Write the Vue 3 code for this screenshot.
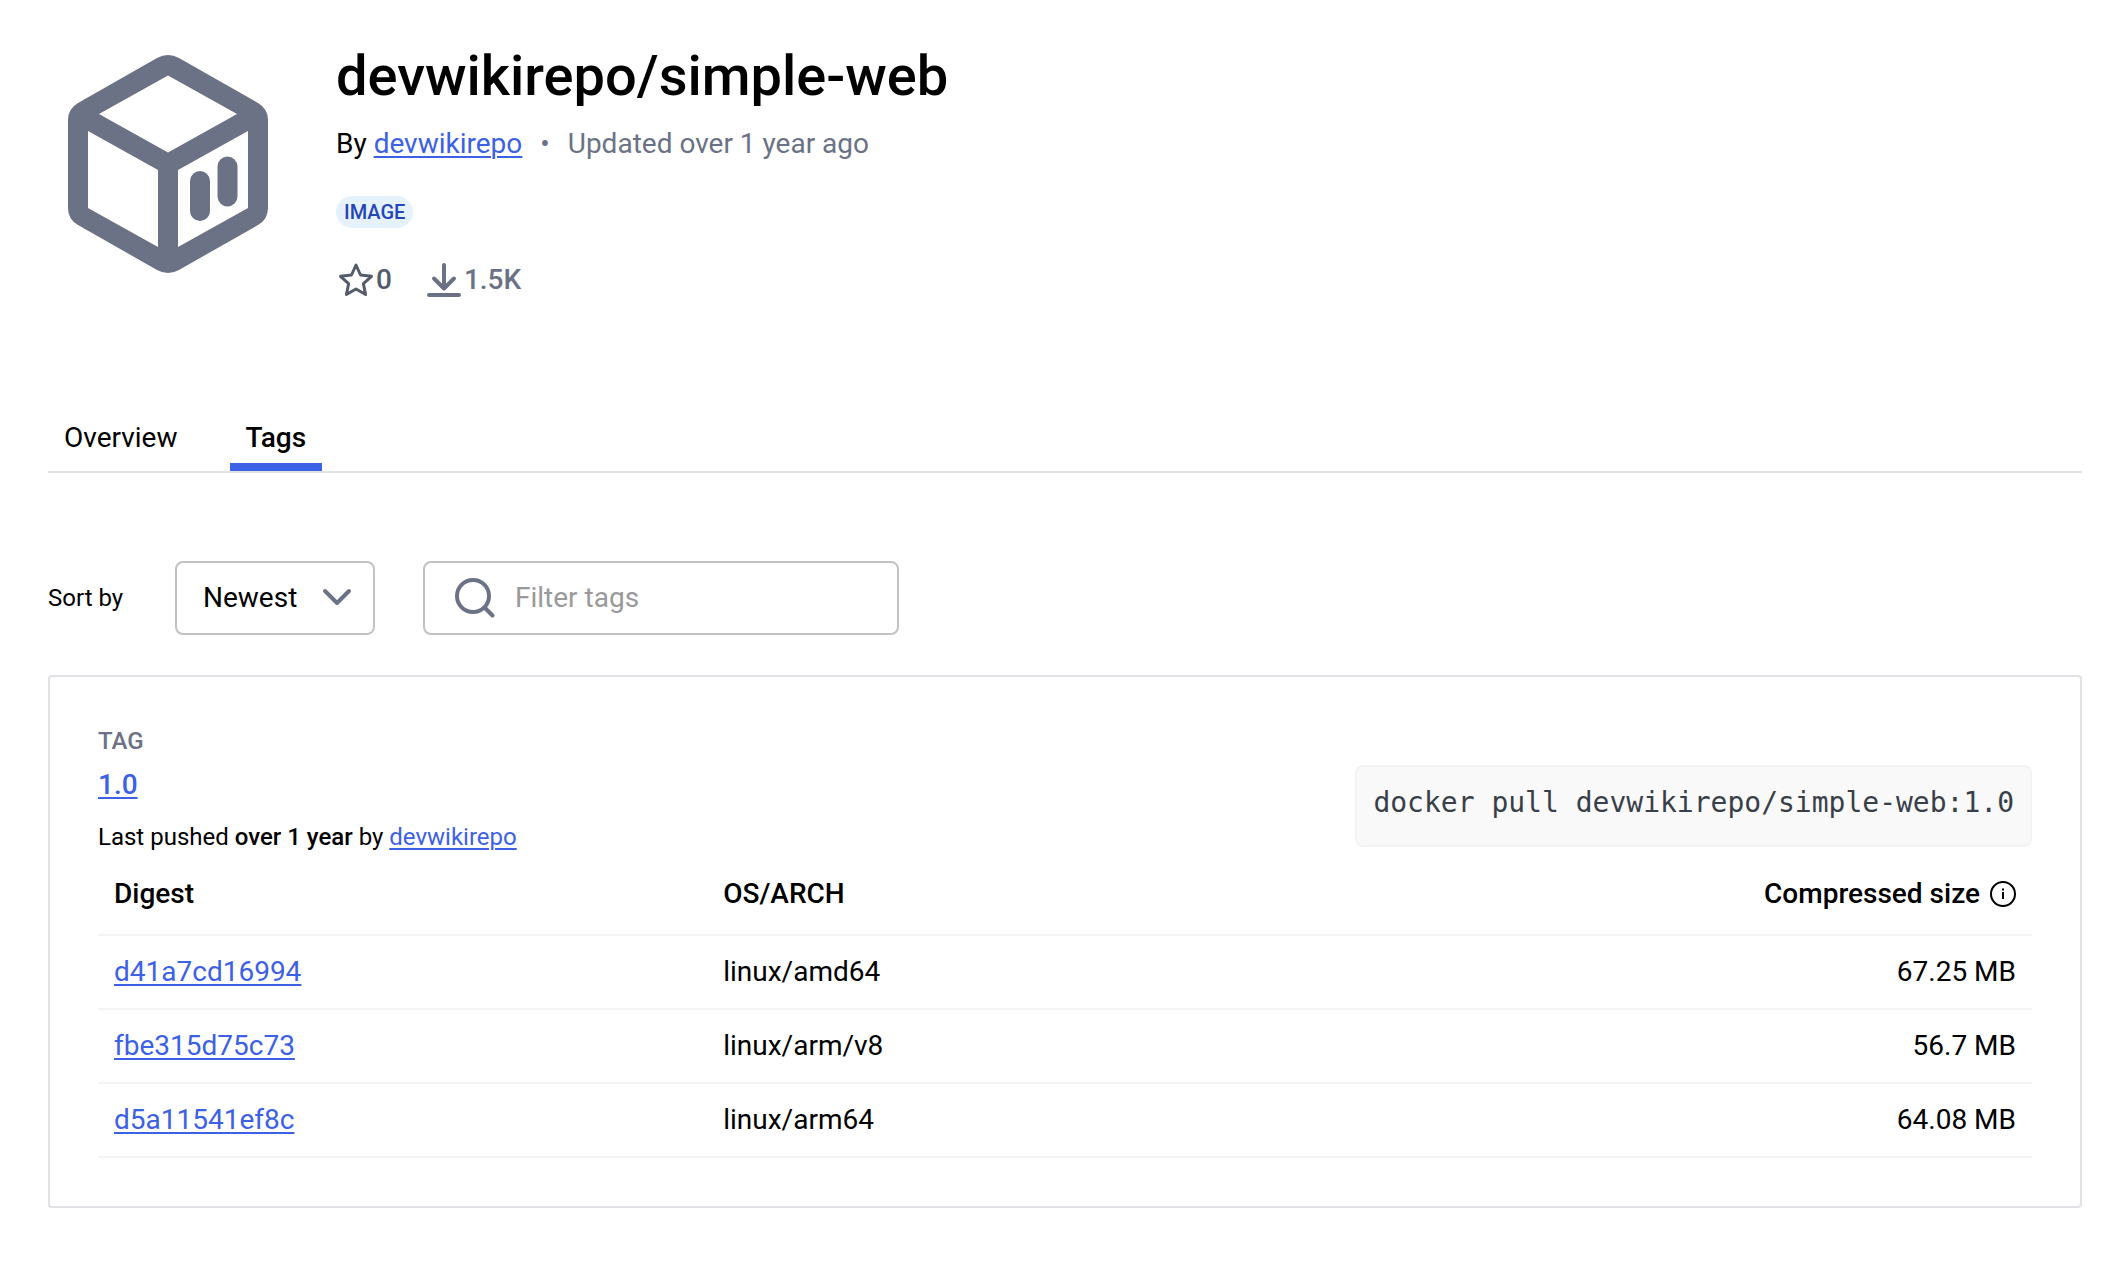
<script setup>
import { ref } from 'vue'

const sort = ref('Newest')
const filter = ref('')
const images = [
  { digest: 'd41a7cd16994', arch: 'linux/amd64', size: '67.25 MB' },
  { digest: 'fbe315d75c73', arch: 'linux/arm/v8', size: '56.7 MB' },
  { digest: 'd5a11541ef8c', arch: 'linux/arm64', size: '64.08 MB' },
]
</script>

<template>
  <main class="page">
    <header class="repo">
      <svg class="logo" viewBox="0 0 240 240" aria-hidden="true">
        <path
          fill-rule="evenodd"
          d="M20 77A20 20 0 0 1 30 59L109 14Q120 8 131 14L210 59A20 20 0 0 1 220 77V163A20 20 0 0 1 210 181L131 226Q120 232 109 226L30 181A20 20 0 0 1 20 163ZM120 31.5L51 70L120 108.5L189 70ZM40 87V164L110 203V126ZM200 87L130 126V203L200 164Z"
        />
        <rect x="142" y="127" width="20" height="50" rx="10" />
        <rect x="169.5" y="112.5" width="20" height="50" rx="10" />
      </svg>
      <div class="info">
        <h1>devwikirepo/simple-web</h1>
        <p class="byline">
          <span>By <a href="#owner">devwikirepo</a></span>
          <span class="muted">•</span>
          <span class="muted">Updated over 1 year ago</span>
        </p>
        <span class="badge">IMAGE</span>
        <div class="stats">
          <span class="stat stars">
            <svg width="40" height="40" viewBox="0 0 40 40" aria-hidden="true">
              <path d="M20 5L24.5 15L35.5 16.3L27.4 23.7L29.6 34.5L20 29L10.4 34.5L12.6 23.7L4.5 16.3L15.5 15Z" />
            </svg>
            <span>0</span>
          </span>
          <span class="stat">
            <svg width="40" height="40" viewBox="0 0 40 40" aria-hidden="true">
              <path d="M20 5V28M10 18.5L20 28.5L30 18.5M5 35H35" />
            </svg>
            <span>1.5K</span>
          </span>
        </div>
      </div>
    </header>

    <nav class="tabs">
      <a href="#overview">Overview</a>
      <a href="#tags" class="active" aria-current="page">Tags</a>
    </nav>

    <div class="toolbar">
      <label for="sort">Sort by</label>
      <div class="select">
        <select id="sort" v-model="sort">
          <option>Newest</option>
          <option>Oldest</option>
          <option>A-Z</option>
          <option>Z-A</option>
        </select>
        <svg width="40" height="40" viewBox="0 0 40 40" aria-hidden="true">
          <path d="M8 14L20 26L32 14" />
        </svg>
      </div>
      <div class="search">
        <svg width="48" height="48" viewBox="0 0 48 48" aria-hidden="true">
          <circle cx="22" cy="22" r="16" />
          <path d="M33.5 33.5L41.5 41.5" />
        </svg>
        <input v-model="filter" type="text" placeholder="Filter tags" aria-label="Filter tags" />
      </div>
    </div>

    <section class="card">
      <div class="tag-head">
        <div>
          <p class="eyebrow">TAG</p>
          <p class="tag-name"><a href="#tag">1.0</a></p>
          <p class="pushed">Last pushed <strong>over 1 year</strong> by <a href="#pusher">devwikirepo</a></p>
        </div>
        <code>docker pull devwikirepo/simple-web:1.0</code>
      </div>
      <table>
        <thead>
          <tr>
            <th class="digest">Digest</th>
            <th class="arch">OS/ARCH</th>
            <th class="size">
              <span class="size-label">
                Compressed size
                <svg width="26" height="26" viewBox="0 0 26 26" aria-hidden="true">
                  <circle cx="13" cy="13" r="12" />
                  <path d="M13 11V18M13 7.5V9.5" />
                </svg>
              </span>
            </th>
          </tr>
        </thead>
        <tbody>
          <tr v-for="image in images" :key="image.digest">
            <td><a :href="'#' + image.digest">{{ image.digest }}</a></td>
            <td>{{ image.arch }}</td>
            <td class="size">{{ image.size }}</td>
          </tr>
        </tbody>
      </table>
    </section>
  </main>
</template>

<style>
body {
  margin: 0;
  background: #fff;
}
</style>

<style scoped>
.page {
  box-sizing: border-box;
  padding: 44px 32px 56px 48px;
  font: 400 28px/36px Roboto, 'Liberation Sans', sans-serif;
  color: #000;
}
h1,
p {
  margin: 0;
}
a {
  color: #3c61e5;
  text-decoration-thickness: 2px;
  text-underline-offset: 3px;
}
svg {
  flex: none;
  fill: none;
  stroke: #6b7285;
  stroke-width: 4;
  stroke-linecap: round;
  stroke-linejoin: round;
}

.repo {
  display: flex;
  align-items: flex-start;
  gap: 48px;
}
.logo {
  width: 240px;
  height: 240px;
  fill: #6b7285;
  stroke: none;
}
.info {
  display: flex;
  flex-direction: column;
  align-items: flex-start;
}
h1 {
  font-size: 56px;
  line-height: 64px;
  font-weight: 500;
}
.byline {
  display: flex;
  gap: 18px;
  margin-top: 18px;
}
.muted {
  color: #6b7285;
}
.badge {
  margin-top: 34px;
  padding: 0 8px;
  border-radius: 16px;
  background: #e6f2fb;
  color: #2545b8;
  font-size: 20px;
  line-height: 32px;
  font-weight: 500;
}
.stats {
  display: flex;
  gap: 32px;
  margin-top: 32px;
  color: #6b7285;
  font-weight: 500;
}
.stat {
  display: flex;
  align-items: center;
}
.stars {
  color: #545c6b;
}
.stars svg {
  stroke: #545c6b;
  stroke-width: 3;
}

.tabs {
  display: flex;
  gap: 36px;
  margin-top: 120px;
  border-bottom: 2px solid #e1e2e6;
}
.tabs a {
  padding: 0 16px 7px;
  border-bottom: 8px solid transparent;
  color: #000;
  text-decoration: none;
}
.tabs .active {
  border-color: #3c61e5;
  font-weight: 500;
}

.toolbar {
  display: flex;
  align-items: center;
  gap: 48px;
  margin-top: 88px;
}
.toolbar label {
  min-width: 79px;
  font-size: 24px;
  line-height: 32px;
}
.select {
  position: relative;
  width: 200px;
}
.select select {
  appearance: none;
  box-sizing: border-box;
  width: 100%;
  height: 74px;
  padding: 0 56px 0 26px;
  border: 2px solid #c2c2c2;
  border-radius: 8px;
  background: #fff;
  font: inherit;
  color: inherit;
}
.select svg {
  position: absolute;
  top: 16px;
  right: 18px;
  pointer-events: none;
}
.search {
  box-sizing: border-box;
  display: flex;
  align-items: center;
  gap: 16px;
  width: 476px;
  height: 74px;
  padding: 0 26px;
  border: 2px solid #c2c2c2;
  border-radius: 8px;
}
.search input {
  flex: 1;
  min-width: 0;
  padding: 0;
  border: 0;
  outline: 0;
  background: transparent;
  font: inherit;
  color: inherit;
}
.search input::placeholder {
  color: #999;
}

.card {
  margin-top: 40px;
  padding: 48px;
  border: 2px solid #e1e2e6;
  border-radius: 4px;
}
.tag-head {
  display: flex;
  justify-content: space-between;
  align-items: flex-end;
}
.eyebrow {
  font-size: 24px;
  line-height: 32px;
  font-weight: 500;
  color: #6b7285;
}
.tag-name {
  margin-top: 10px;
  font-weight: 500;
}
.pushed {
  margin-top: 18px;
  font-size: 24px;
  line-height: 32px;
}
strong {
  font-weight: 500;
}
code {
  margin-bottom: 6px;
  padding: 20px 16px 26px;
  border: 2px solid #f2f3f4;
  border-radius: 8px;
  background: #f9f9fa;
  color: #393f49;
  font: 28px/32px 'DejaVu Sans Mono', monospace;
}
table {
  width: 100%;
  border-collapse: separate;
  border-spacing: 0;
  table-layout: fixed;
}
th,
td {
  box-sizing: border-box;
  padding: 18px 16px;
  border-bottom: 2px solid #f3f3f5;
  text-align: left;
}
th {
  padding: 23px 16px 22px;
  font-weight: 500;
}
.digest,
.arch {
  width: 31.5%;
}
.size {
  text-align: right;
}
.size-label {
  display: flex;
  align-items: center;
  justify-content: flex-end;
  gap: 10px;
}
.size-label svg {
  stroke: #000;
  stroke-width: 2;
  stroke-linecap: butt;
}
</style>
